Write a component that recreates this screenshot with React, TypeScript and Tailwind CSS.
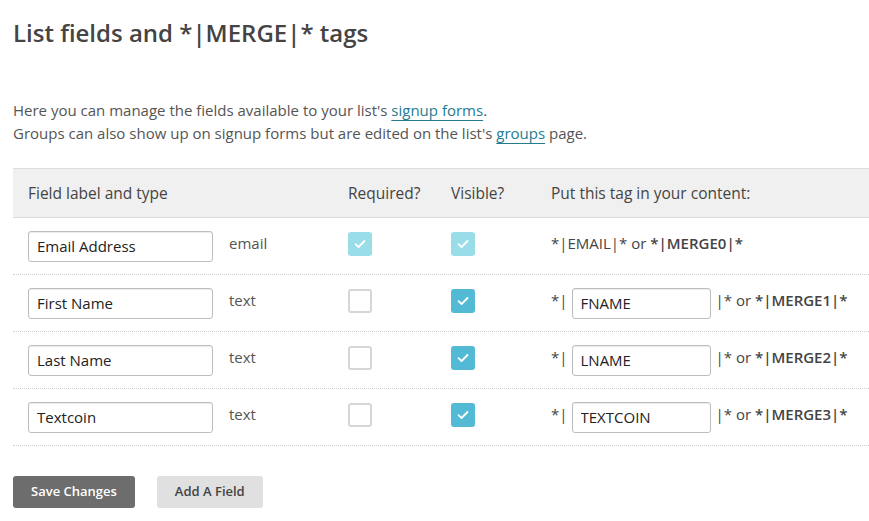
import React from 'react';

interface FieldRow {
  label: string;
  type: string;
  tag: string;
  merge: string;
  required: boolean;
  locked?: boolean;
}

const rows: FieldRow[] = [
  { label: 'Email Address', type: 'email', tag: 'EMAIL', merge: 'MERGE0', required: true, locked: true },
  { label: 'First Name', type: 'text', tag: 'FNAME', merge: 'MERGE1', required: false },
  { label: 'Last Name', type: 'text', tag: 'LNAME', merge: 'MERGE2', required: false },
  { label: 'Textcoin', type: 'text', tag: 'TEXTCOIN', merge: 'MERGE3', required: false },
];

const Check = ({ checked, locked }: { checked: boolean; locked?: boolean }) => {
  if (!checked) {
    return <span className="block w-6 h-6 rounded-[3px] border-2 border-[#d6d6d6] bg-white" />;
  }
  return (
    <span
      className={
        locked
          ? 'flex items-center justify-center w-6 h-6 rounded-[3px] bg-[#99dde9]'
          : 'flex items-center justify-center w-6 h-6 rounded-[3px] bg-[#52bad5]'
      }
    >
      <svg width="12" height="10" viewBox="0 0 12 10" fill="none">
        <path d="M1.5 5.2 L4.6 8 L10.5 2" stroke="white" strokeWidth="1.8" strokeLinecap="round" strokeLinejoin="round" />
      </svg>
    </span>
  );
};

const inputCls =
  'h-[31px] border border-[#bdbdbd] rounded-[3px] shadow-[inset_0_1px_1px_rgba(0,0,0,0.08)] px-[8px] text-[15px] text-[#222] bg-white outline-none';

export default function App() {
  return (
    <div className="bg-white w-[869px] h-[521px] font-['Open_Sans',sans-serif] text-[#555]">
      <h1 className="pl-[13px] pt-[16px] text-[24px] leading-[34px] font-semibold text-[#444]">
        List fields and *|MERGE|* tags
      </h1>

      <div className="pl-[13px] mt-[49px] text-[15px] leading-[23px] text-[#555]">
        <p>
          Here you can manage the fields available to your list's{' '}
          <a className="text-[#247c91] underline underline-offset-[4px]">signup forms</a>.
        </p>
        <p>
          Groups can also show up on signup forms but are edited on the list's{' '}
          <a className="text-[#247c91] underline underline-offset-[4px]">groups</a> page.
        </p>
      </div>

      <div className="ml-[13px] mt-[23px]">
        {/* Header */}
        <div className="grid grid-cols-[201px_119px_103px_100px_1fr] items-center pl-[15px] h-[50px] bg-[#f0f0f0] border-t border-[#dedede] border-b border-b-[#dcdcdc] text-[15.5px] text-[#444]">
          <div className="col-span-2 mt-[1px]">Field label and type</div>
          <div className="mt-[1px]">Required?</div>
          <div className="mt-[1px]">Visible?</div>
          <div className="mt-[1px]">Put this tag in your content:</div>
        </div>

        {rows.map((r) => (
          <div
            key={r.label}
            className="grid grid-cols-[201px_119px_103px_100px_1fr] items-center pl-[15px] h-[57px] border-b border-dotted border-[#cfcfcf] text-[15px]"
          >
            <div>
              <input className={`${inputCls} w-[185px]`} defaultValue={r.label} readOnly />
            </div>
            <div className="-mt-[6px] text-[#555]">{r.type}</div>
            <div className="-mt-[4px]">
              <Check checked={r.required} locked={r.locked} />
            </div>
            <div className="-mt-[4px]">
              <Check checked={true} locked={r.locked} />
            </div>
            {r.locked ? (
              <div className="-mt-[6px] text-[#444] whitespace-nowrap">
                *|{r.tag}|* or <span className="font-semibold">*|{r.merge}|*</span>
              </div>
            ) : (
              <div className="flex items-center text-[#444] whitespace-nowrap">
                <span className="-mt-[5px] mr-[4px]">*|</span>
                <input className={`${inputCls} w-[139px]`} defaultValue={r.tag} readOnly />
                <span className="-mt-[5px] ml-[5px]">
                  |* or <span className="font-semibold">*|{r.merge}|*</span>
                </span>
              </div>
            )}
          </div>
        ))}
      </div>

      <div className="flex gap-[22px] pl-[13px] mt-[30px]">
        <button className="h-[32px] px-[18px] rounded-[3px] bg-[#6d6d6d] text-white text-[13px] font-semibold">
          Save Changes
        </button>
        <button className="h-[32px] px-[18px] rounded-[3px] bg-[#e0e0e0] text-[#444] text-[13px] font-semibold">
          Add A Field
        </button>
      </div>
    </div>
  );
}
